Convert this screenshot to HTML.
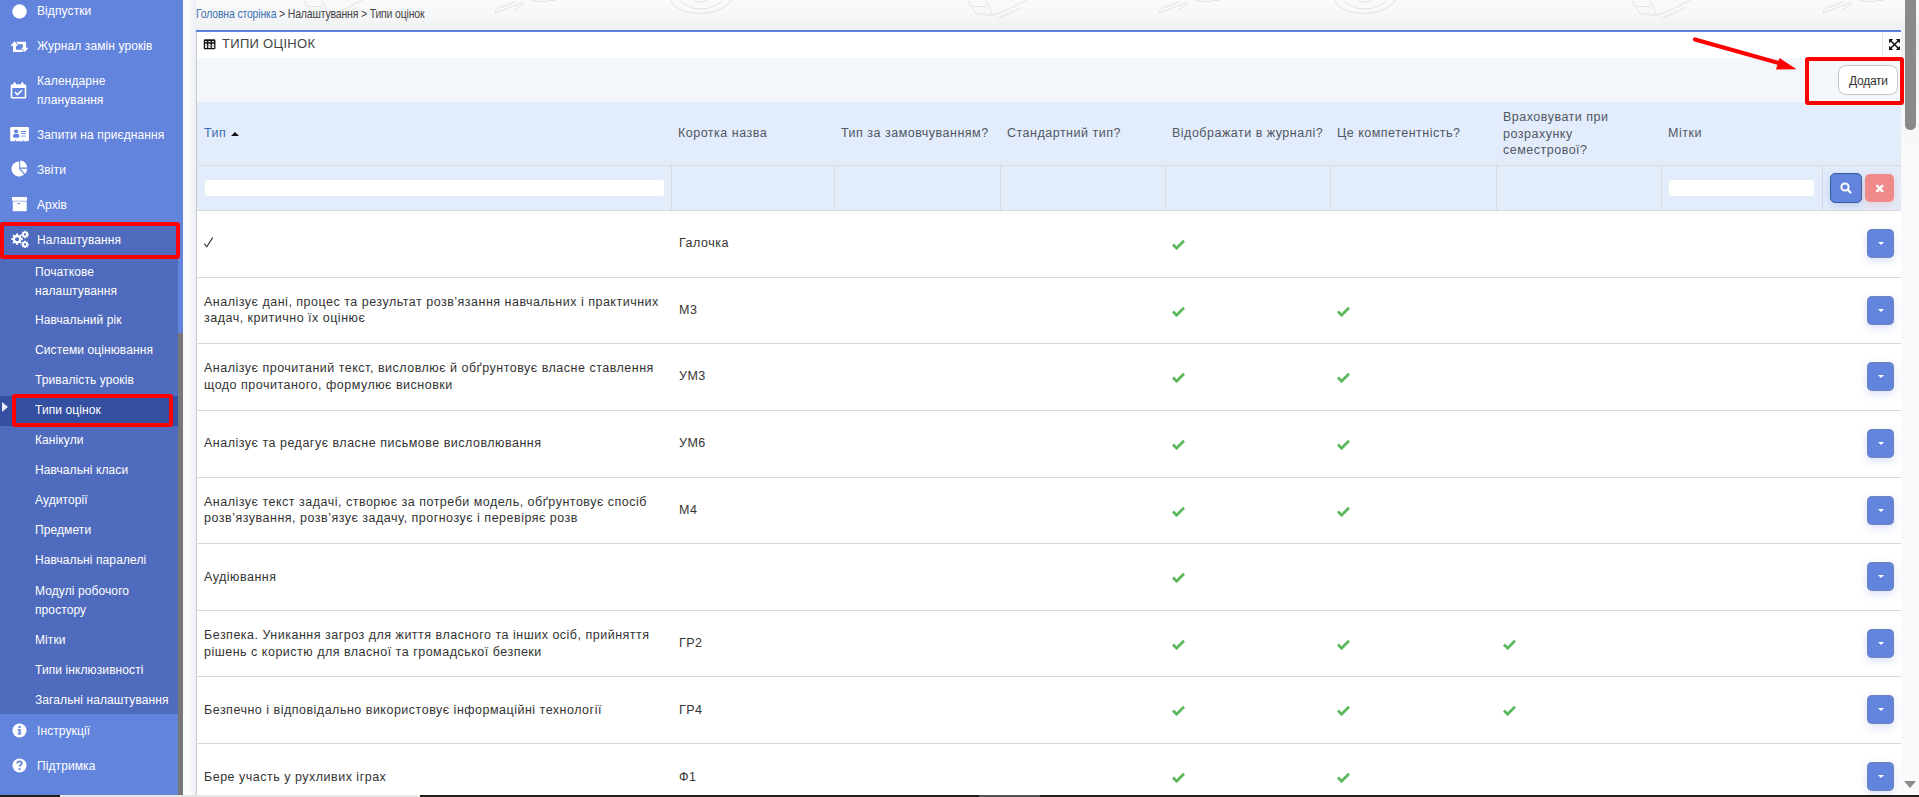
<!DOCTYPE html><html><head><meta charset="utf-8"><style>
*{box-sizing:border-box;margin:0;padding:0}
html,body{width:1919px;height:797px;overflow:hidden;font-family:"Liberation Sans",sans-serif}
body{background:#fafafa;position:relative}
.a{position:absolute}
#bg{left:183px;top:0;width:1736px;height:797px;background:linear-gradient(#fafafa 0,#f7f8f9 12px,#eef0f3 30px,#f3f4f6 70px,#f9f9fa 160px,#fafafa 300px)}
#sb{left:0;top:0;width:183px;height:797px;background:#6384dd;overflow:hidden}
.mi{position:absolute;left:37px;font-size:12px;letter-spacing:0.1px;color:#fff;white-space:nowrap;line-height:19px}
.si{position:absolute;left:35px;font-size:12px;letter-spacing:0.1px;color:#fff;white-space:nowrap;line-height:19px}
.ic{position:absolute}
#sub{left:0;top:222px;width:178px;height:492px;background:#4f6bbd}
#sbthumb{left:178px;top:333px;width:5px;height:464px;background:#777}
#gap{left:183px;top:0;width:13px;height:797px;background:linear-gradient(90deg,#f9f9fa,#fbfbfc 45%,#eaeef6)}
#panel{left:196px;top:30px;width:1705px;height:767px;background:#fff}
.t{position:absolute;font-size:12.5px;letter-spacing:0.5px;color:#333;white-space:nowrap;line-height:16px}
.h{position:absolute;font-size:12.5px;letter-spacing:0.5px;color:#4f5764;white-space:nowrap;line-height:16.5px}
.hl{position:absolute;height:1px;background:#dadada}
.vl{position:absolute;width:1px;background:#d6d9de}
.ck{position:absolute;width:13px;height:11px}
.dd{position:absolute;left:1670.5px;width:27.5px;height:29px;border-radius:5px;background:#6384dd;box-shadow:inset 0 0 0 0.6px rgba(150,130,100,.45),0 3px 8px rgba(99,132,221,.25)}
.dd:after{content:"";position:absolute;left:11.3px;top:13px;border-left:3.5px solid transparent;border-right:3.5px solid transparent;border-top:3.5px solid #fff}
</style></head><body>
<div id="bg" class="a"></div>
<svg class="a" style="left:0;top:0" width="1919" height="30"><g fill="none" stroke="#e2e3e6" stroke-width="1"><g transform="translate(-1328,0)"><path d="M1188 2 L1163 11.5 Q1157 14 1160 12.5 Q1158 9 1166 7 L1180 1" /><path d="M1177 11 L1188 3"/><path d="M1195 0.5 Q1208 3 1220 0"/><path d="M1333 -2 Q1340 14 1365 13.5 Q1392 12 1398 -4"/><path d="M1343 -1 Q1350 9 1365 9 Q1382 8 1388 -2"/><path d="M1358 0 Q1365 4 1372 0"/><path d="M1631.5 0 L1640 13.5 L1657 15.5 L1649.4 0 M1637 6.5 L1651 6.5 M1658 15 Q1672 10 1691 0 M1662 18.5 Q1675 13 1686 7"/></g><g transform="translate(-664,0)"><path d="M1188 2 L1163 11.5 Q1157 14 1160 12.5 Q1158 9 1166 7 L1180 1" /><path d="M1177 11 L1188 3"/><path d="M1195 0.5 Q1208 3 1220 0"/><path d="M1333 -2 Q1340 14 1365 13.5 Q1392 12 1398 -4"/><path d="M1343 -1 Q1350 9 1365 9 Q1382 8 1388 -2"/><path d="M1358 0 Q1365 4 1372 0"/><path d="M1631.5 0 L1640 13.5 L1657 15.5 L1649.4 0 M1637 6.5 L1651 6.5 M1658 15 Q1672 10 1691 0 M1662 18.5 Q1675 13 1686 7"/></g><g transform="translate(0,0)"><path d="M1188 2 L1163 11.5 Q1157 14 1160 12.5 Q1158 9 1166 7 L1180 1" /><path d="M1177 11 L1188 3"/><path d="M1195 0.5 Q1208 3 1220 0"/><path d="M1333 -2 Q1340 14 1365 13.5 Q1392 12 1398 -4"/><path d="M1343 -1 Q1350 9 1365 9 Q1382 8 1388 -2"/><path d="M1358 0 Q1365 4 1372 0"/><path d="M1631.5 0 L1640 13.5 L1657 15.5 L1649.4 0 M1637 6.5 L1651 6.5 M1658 15 Q1672 10 1691 0 M1662 18.5 Q1675 13 1686 7"/></g><g transform="translate(664,0)"><path d="M1188 2 L1163 11.5 Q1157 14 1160 12.5 Q1158 9 1166 7 L1180 1" /><path d="M1177 11 L1188 3"/><path d="M1195 0.5 Q1208 3 1220 0"/><path d="M1333 -2 Q1340 14 1365 13.5 Q1392 12 1398 -4"/><path d="M1343 -1 Q1350 9 1365 9 Q1382 8 1388 -2"/><path d="M1358 0 Q1365 4 1372 0"/><path d="M1631.5 0 L1640 13.5 L1657 15.5 L1649.4 0 M1637 6.5 L1651 6.5 M1658 15 Q1672 10 1691 0 M1662 18.5 Q1675 13 1686 7"/></g></g></svg>
<div id="sb" class="a">
<div id="sub" class="a"></div>
<div class="a" style="left:0;top:396px;width:178px;height:30px;background:#3550a0"></div>
<div id="sbthumb" class="a"></div>
<div class="mi" style="top:2px">Відпустки</div>
<div class="mi" style="top:37px">Журнал замін уроків</div>
<div class="mi" style="top:72px">Календарне<br>планування</div>
<div class="mi" style="top:126px">Запити на приєднання</div>
<div class="mi" style="top:161px">Звіти</div>
<div class="mi" style="top:196px">Архів</div>
<div class="mi" style="top:231px">Налаштування</div>
<div class="si" style="top:263px">Початкове<br>налаштування</div>
<div class="si" style="top:311px">Навчальний рік</div>
<div class="si" style="top:341px">Системи оцінювання</div>
<div class="si" style="top:371px">Тривалість уроків</div>
<div class="si" style="top:401px">Типи оцінок</div>
<div class="si" style="top:431px">Канікули</div>
<div class="si" style="top:461px">Навчальні класи</div>
<div class="si" style="top:491px">Аудиторії</div>
<div class="si" style="top:521px">Предмети</div>
<div class="si" style="top:551px">Навчальні паралелі</div>
<div class="si" style="top:582px">Модулі робочого<br>простору</div>
<div class="si" style="top:631px">Мітки</div>
<div class="si" style="top:661px">Типи інклюзивності</div>
<div class="si" style="top:691px">Загальні налаштування</div>
<div class="mi" style="top:722px">Інструкції</div>
<div class="mi" style="top:757px">Підтримка</div>
<svg class="ic" style="left:12px;top:4px" width="15" height="15"><circle cx="7.5" cy="7.5" r="7.2" fill="#fff"/></svg>
<svg class="ic" style="left:10px;top:41px" width="19" height="11" viewBox="0 0 19 11"><path fill="#fff" d="M0.5 4.7 L4.5 0.2 L8.2 4.7 L6 4.7 L6 8.7 L11.9 8.7 L13.6 10.9 L3 10.9 L3 4.7 Z M18.5 6.7 L14.7 10.9 L11 6.7 L12.9 6.7 L12.9 3.2 L7.8 3.2 L6.1 0.8 L16 0.8 L16 6.7 Z"/></svg>
<svg class="ic" style="left:10px;top:82px" width="17" height="17" viewBox="0 0 17 17"><rect x="1.5" y="3.2" width="14" height="12.6" rx="0.8" fill="none" stroke="#fff" stroke-width="1.6"/><rect x="1" y="2.6" width="15" height="3.4" fill="#fff"/><rect x="3.6" y="0.3" width="2.2" height="3.6" rx="1" fill="#fff"/><rect x="11.2" y="0.3" width="2.2" height="3.6" rx="1" fill="#fff"/><path d="M5 10.2 L7.5 12.6 L12 8.2" fill="none" stroke="#fff" stroke-width="1.6"/></svg>
<svg class="ic" style="left:10px;top:127px" width="19" height="15" viewBox="0 0 19 15"><rect x="0.2" y="0" width="18.7" height="14.3" rx="1.2" fill="#fff"/><circle cx="6.1" cy="4.5" r="2.1" fill="#6384dd"/><rect x="3.1" y="7" width="6.2" height="3.7" rx="1.5" fill="#6384dd"/><rect x="10.9" y="4" width="5.1" height="1" fill="#6384dd"/><rect x="10.9" y="6" width="5.1" height="0.9" fill="#6384dd"/><rect x="10.9" y="8.3" width="5.1" height="1.7" fill="#6384dd" opacity=".45"/><rect x="5" y="13.1" width="0.9" height="1.2" fill="#6384dd"/><rect x="13.2" y="13.1" width="0.9" height="1.2" fill="#6384dd"/></svg>
<svg class="ic" style="left:11px;top:160px" width="17" height="17" viewBox="0 0 17 17"><path fill="#fff" d="M8.2 1.4 A7.5 7.5 0 1 0 13 14.5 L8.2 8.9 Z"/><path fill="#fff" d="M9.2 0.6 A7.2 7.2 0 0 1 16.2 7.6 L9.2 7.6 Z"/><path fill="#fff" d="M9.6 8.7 L16.2 8.7 A7.3 7.3 0 0 1 13.9 13.8 Z"/></svg>
<svg class="ic" style="left:11px;top:196px" width="17" height="16" viewBox="0 0 17 16"><rect x="1" y="1" width="15" height="3.8" fill="#fff"/><rect x="1.8" y="5.4" width="13.9" height="9.8" fill="#fff"/><rect x="6.2" y="7.2" width="3" height="0.9" fill="#6384dd"/></svg>
<svg class="ic" style="left:10px;top:230px" width="19" height="18" viewBox="0 0 19 18"><g fill="#fff"><path d="M6.5 3.2 l1.2 0 .4 1.6 1.3.6 1.4-.9 .9.9 -.9 1.4 .6 1.3 1.6.4 0 1.2 -1.6.4 -.6 1.3 .9 1.4 -.9.9 -1.4-.9 -1.3.6 -.4 1.6 -1.2 0 -.4-1.6 -1.3-.6 -1.4.9 -.9-.9 .9-1.4 -.6-1.3 -1.6-.4 0-1.2 1.6-.4 .6-1.3 -.9-1.4 .9-.9 1.4.9 1.3-.6z"/></g><circle cx="7.1" cy="9.2" r="2" fill="#4f6bbd"/><g fill="#fff"><path d="M14.6 0.5 l.9 0 .3 1 .8.4 .9-.5 .6.6 -.5.9 .4.8 1 .3 0 .9 -1 .3 -.4.8 .5.9 -.6.6 -.9-.5 -.8.4 -.3 1 -.9 0 -.3-1 -.8-.4 -.9.5 -.6-.6 .5-.9 -.4-.8 -1-.3 0-.9 1-.3 .4-.8 -.5-.9 .6-.6 .9.5 .8-.4z"/><path d="M14.6 10.5 l.9 0 .3 1 .8.4 .9-.5 .6.6 -.5.9 .4.8 1 .3 0 .9 -1 .3 -.4.8 .5.9 -.6.6 -.9-.5 -.8.4 -.3 1 -.9 0 -.3-1 -.8-.4 -.9.5 -.6-.6 .5-.9 -.4-.8 -1-.3 0-.9 1-.3 .4-.8 -.5-.9 .6-.6 .9.5 .8-.4z"/></g><circle cx="15" cy="4.4" r="1.1" fill="#4f6bbd"/><circle cx="15" cy="14.4" r="1.1" fill="#4f6bbd"/></svg>
<svg class="ic" style="left:12px;top:722.5px" width="15" height="15" viewBox="0 0 15 15"><circle cx="7.5" cy="7.5" r="7" fill="#fff"/><circle cx="7.6" cy="3.9" r="1.2" fill="#6384dd"/><path fill="#6384dd" d="M5.6 6 H8.7 V10.4 H9.6 V11.6 H5.6 V10.4 H6.5 V7.2 H5.6 Z"/></svg>
<svg class="ic" style="left:12px;top:757.5px" width="15" height="15" viewBox="0 0 15 15"><circle cx="7.5" cy="7.5" r="7" fill="#fff"/><path d="M5.2 5.6 Q5.2 3.3 7.5 3.3 Q9.8 3.3 9.8 5.3 Q9.8 6.6 8.4 7.3 Q7.6 7.7 7.6 8.8" fill="none" stroke="#6384dd" stroke-width="1.7"/><circle cx="7.6" cy="11.2" r="1.1" fill="#6384dd"/></svg>
<div class="a" style="left:2px;top:402px;width:0;height:0;border-top:5px solid transparent;border-bottom:5px solid transparent;border-left:6px solid #e8ecf8"></div>
<div class="a" style="left:0;top:221.5px;width:180.3px;height:37.5px;border:4px solid #f00;border-radius:3px"></div>
<div class="a" style="left:12px;top:394px;width:161px;height:33px;border:4px solid #f00;border-radius:3px"></div>
</div>
<div id="gap" class="a"></div>
<div class="a" style="left:196px;top:6px;font-size:13px;line-height:16px;white-space:nowrap;transform:scaleX(0.805);transform-origin:0 0;letter-spacing:-0.2px;color:#444"><span style="color:#4270b0">Головна сторінка</span> &gt; Налаштування &gt; Типи оцінок</div>
<div class="a" style="left:1905px;top:0;width:11px;height:130px;background:#8a8a8a;border-radius:0 0 5px 5px"></div>
<div class="a" style="left:1904px;top:781px;width:0;height:0;border-left:6.5px solid transparent;border-right:6.5px solid transparent;border-top:7px solid #8a8a8a"></div>
<div id="panel" class="a">
<div class="a" style="left:0;top:28px;width:1705px;height:44px;background:#f3f6fa"></div>
<div class="a" style="left:0;top:72px;width:1705px;height:108px;background:#e3ecfa"></div>
<div class="a" style="left:0;top:0;width:1px;height:767px;background:#c9c9c9"></div><div class="a" style="left:0;top:0;width:1705px;height:2px;background:#5b7fdc"></div>
<div class="a" style="left:1686px;top:2px;width:1px;height:25px;background:#e2e2e2"></div>
<svg class="a" style="left:7px;top:9px" width="13" height="11" viewBox="0 0 13 11"><g fill="none" stroke="#111" stroke-width="1.3"><rect x="1.4" y="1.2" width="10.4" height="8.4" rx="0.6"/><path d="M4.6 1 V9.8 M8.3 1 V9.8 M1 4 H12"/></g><path d="M1 1.4 H12" stroke="#111" stroke-width="1.6"/><path d="M1.5 6.8 H11.5" stroke="#888" stroke-width="0.8"/></svg>
<div class="a" style="left:26px;top:6px;font-size:13px;letter-spacing:0.3px;color:#444;line-height:16px;white-space:nowrap">ТИПИ ОЦІНОК</div>
<svg class="a" style="left:1693px;top:9px" width="11" height="11" viewBox="0 0 11 11"><g fill="#111"><path d="M0 0 H4.2 L0 4.2 Z"/><path d="M11 0 V4.2 L6.8 0 Z"/><path d="M0 11 V6.8 L4.2 11 Z"/><path d="M11 11 H6.8 L11 6.8 Z"/></g><path d="M1.2 1.2 L9.8 9.8 M9.8 1.2 L1.2 9.8" stroke="#111" stroke-width="1.5"/></svg>
<div class="a" style="left:1642px;top:35px;width:60px;height:30px;background:#fff;border:1px solid #c8c8c8;border-radius:8px"></div>
<div class="a" style="left:1653px;top:44px;font-size:12px;letter-spacing:-0.25px;color:#333;line-height:14px;white-space:nowrap">Додати</div>
<div class="h" style="left:482px;top:95px">Коротка назва</div>
<div class="h" style="left:645px;top:95px">Тип за замовчуванням?</div>
<div class="h" style="left:811px;top:95px">Стандартний тип?</div>
<div class="h" style="left:976px;top:95px">Відображати в журналі?</div>
<div class="h" style="left:1141px;top:95px">Це компетентність?</div>
<div class="h" style="left:1472px;top:95px">Мітки</div>
<div class="h" style="left:1307px;top:79px">Враховувати при<br>розрахунку<br>семестрової?</div>
<div class="h" style="left:8px;top:95px;color:#3d6bb3">Тип</div>
<div class="a" style="left:35px;top:102px;width:0;height:0;border-left:4px solid transparent;border-right:4px solid transparent;border-bottom:4.5px solid #111"></div>
<div class="hl" style="left:0;top:135px;width:1705px"></div>
<div class="hl" style="left:0;top:180px;width:1705px"></div>
<div class="vl" style="left:475px;top:136px;height:44px"></div>
<div class="vl" style="left:638px;top:136px;height:44px"></div>
<div class="vl" style="left:804px;top:136px;height:44px"></div>
<div class="vl" style="left:969px;top:136px;height:44px"></div>
<div class="vl" style="left:1134px;top:136px;height:44px"></div>
<div class="vl" style="left:1300px;top:136px;height:44px"></div>
<div class="vl" style="left:1465px;top:136px;height:44px"></div>
<div class="vl" style="left:1626px;top:136px;height:44px"></div>
<div class="a" style="left:9px;top:150px;width:459px;height:16px;background:#fff;border-radius:3px"></div>
<div class="a" style="left:1473px;top:150px;width:145px;height:16px;background:#fff;border-radius:3px"></div>
<div class="a" style="left:1634px;top:143px;width:32px;height:30px;background:#6384dd;border:1px solid #2f5d9c;border-radius:5px;box-shadow:0 3px 8px rgba(99,132,221,.3)"><svg width="30" height="28" style="position:absolute;left:0;top:0"><circle cx="14" cy="13" r="3.6" fill="none" stroke="#fff" stroke-width="2"/><line x1="16.6" y1="15.6" x2="19.5" y2="18.5" stroke="#fff" stroke-width="2.2" stroke-linecap="round"/></svg></div>
<div class="a" style="left:1669px;top:144px;width:29px;height:28px;background:#f08a8a;border-radius:5px;box-shadow:0 3px 8px rgba(240,138,138,.3)"><svg width="29" height="28" style="position:absolute;left:0;top:0"><path d="M12.1 11.9 L17.3 17.1 M17.3 11.9 L12.1 17.1" stroke="#fff" stroke-width="2.5" stroke-linecap="round"/></svg></div>
<svg class="a" style="left:7px;top:206px" width="11" height="12" viewBox="0 0 11 12"><path d="M1.3 7.6 L3.8 10.8 L9.6 1.6" fill="none" stroke="#333" stroke-width="1.1"/></svg>
<div class="t" style="left:483px;top:205px">Галочка</div>
<svg class="ck" viewBox="0 0 13 11" style="left:976px;top:209px"><path d="M1 5.6 L4.6 9.2 L12 1.8" fill="none" stroke="#5cb85c" stroke-width="2.8"/></svg>
<div class="dd" style="top:198.5px"></div>
<div class="hl" style="left:0;top:247px;width:1705px"></div>
<div class="t" style="left:8px;top:264px">Аналізує дані, процес та результат розв’язання навчальних і практичних</div>
<div class="t" style="left:8px;top:280px">задач, критично їх оцінює</div>
<div class="t" style="left:483px;top:272px">М3</div>
<svg class="ck" viewBox="0 0 13 11" style="left:976px;top:276px"><path d="M1 5.6 L4.6 9.2 L12 1.8" fill="none" stroke="#5cb85c" stroke-width="2.8"/></svg>
<svg class="ck" viewBox="0 0 13 11" style="left:1141px;top:276px"><path d="M1 5.6 L4.6 9.2 L12 1.8" fill="none" stroke="#5cb85c" stroke-width="2.8"/></svg>
<div class="dd" style="top:265.5px"></div>
<div class="hl" style="left:0;top:313px;width:1705px"></div>
<div class="t" style="left:8px;top:330px">Аналізує прочитаний текст, висловлює й обґрунтовує власне ставлення</div>
<div class="t" style="left:8px;top:347px">щодо прочитаного, формулює висновки</div>
<div class="t" style="left:483px;top:338px">УМ3</div>
<svg class="ck" viewBox="0 0 13 11" style="left:976px;top:342px"><path d="M1 5.6 L4.6 9.2 L12 1.8" fill="none" stroke="#5cb85c" stroke-width="2.8"/></svg>
<svg class="ck" viewBox="0 0 13 11" style="left:1141px;top:342px"><path d="M1 5.6 L4.6 9.2 L12 1.8" fill="none" stroke="#5cb85c" stroke-width="2.8"/></svg>
<div class="dd" style="top:331.5px"></div>
<div class="hl" style="left:0;top:380px;width:1705px"></div>
<div class="t" style="left:8px;top:405px">Аналізує та редагує власне письмове висловлювання</div>
<div class="t" style="left:483px;top:405px">УМ6</div>
<svg class="ck" viewBox="0 0 13 11" style="left:976px;top:409px"><path d="M1 5.6 L4.6 9.2 L12 1.8" fill="none" stroke="#5cb85c" stroke-width="2.8"/></svg>
<svg class="ck" viewBox="0 0 13 11" style="left:1141px;top:409px"><path d="M1 5.6 L4.6 9.2 L12 1.8" fill="none" stroke="#5cb85c" stroke-width="2.8"/></svg>
<div class="dd" style="top:398.5px"></div>
<div class="hl" style="left:0;top:447px;width:1705px"></div>
<div class="t" style="left:8px;top:464px">Аналізує текст задачі, створює за потреби модель, обґрунтовує спосіб</div>
<div class="t" style="left:8px;top:480px">розв’язування, розв’язує задачу, прогнозує і перевіряє розв</div>
<div class="t" style="left:483px;top:472px">М4</div>
<svg class="ck" viewBox="0 0 13 11" style="left:976px;top:476px"><path d="M1 5.6 L4.6 9.2 L12 1.8" fill="none" stroke="#5cb85c" stroke-width="2.8"/></svg>
<svg class="ck" viewBox="0 0 13 11" style="left:1141px;top:476px"><path d="M1 5.6 L4.6 9.2 L12 1.8" fill="none" stroke="#5cb85c" stroke-width="2.8"/></svg>
<div class="dd" style="top:465.5px"></div>
<div class="hl" style="left:0;top:513px;width:1705px"></div>
<div class="t" style="left:8px;top:539px">Аудіювання</div>
<svg class="ck" viewBox="0 0 13 11" style="left:976px;top:542px"><path d="M1 5.6 L4.6 9.2 L12 1.8" fill="none" stroke="#5cb85c" stroke-width="2.8"/></svg>
<div class="dd" style="top:531.5px"></div>
<div class="hl" style="left:0;top:580px;width:1705px"></div>
<div class="t" style="left:8px;top:597px">Безпека. Уникання загроз для життя власного та інших осіб, прийняття</div>
<div class="t" style="left:8px;top:614px">рішень с користю для власної та громадської безпеки</div>
<div class="t" style="left:483px;top:605px">ГР2</div>
<svg class="ck" viewBox="0 0 13 11" style="left:976px;top:609px"><path d="M1 5.6 L4.6 9.2 L12 1.8" fill="none" stroke="#5cb85c" stroke-width="2.8"/></svg>
<svg class="ck" viewBox="0 0 13 11" style="left:1141px;top:609px"><path d="M1 5.6 L4.6 9.2 L12 1.8" fill="none" stroke="#5cb85c" stroke-width="2.8"/></svg>
<svg class="ck" viewBox="0 0 13 11" style="left:1307px;top:609px"><path d="M1 5.6 L4.6 9.2 L12 1.8" fill="none" stroke="#5cb85c" stroke-width="2.8"/></svg>
<div class="dd" style="top:598.5px"></div>
<div class="hl" style="left:0;top:646px;width:1705px"></div>
<div class="t" style="left:8px;top:672px">Безпечно і відповідально використовує інформаційні технології</div>
<div class="t" style="left:483px;top:672px">ГР4</div>
<svg class="ck" viewBox="0 0 13 11" style="left:976px;top:675px"><path d="M1 5.6 L4.6 9.2 L12 1.8" fill="none" stroke="#5cb85c" stroke-width="2.8"/></svg>
<svg class="ck" viewBox="0 0 13 11" style="left:1141px;top:675px"><path d="M1 5.6 L4.6 9.2 L12 1.8" fill="none" stroke="#5cb85c" stroke-width="2.8"/></svg>
<svg class="ck" viewBox="0 0 13 11" style="left:1307px;top:675px"><path d="M1 5.6 L4.6 9.2 L12 1.8" fill="none" stroke="#5cb85c" stroke-width="2.8"/></svg>
<div class="dd" style="top:664.5px"></div>
<div class="hl" style="left:0;top:713px;width:1705px"></div>
<div class="t" style="left:8px;top:739px">Бере участь у рухливих іграх</div>
<div class="t" style="left:483px;top:739px">Ф1</div>
<svg class="ck" viewBox="0 0 13 11" style="left:976px;top:742px"><path d="M1 5.6 L4.6 9.2 L12 1.8" fill="none" stroke="#5cb85c" stroke-width="2.8"/></svg>
<svg class="ck" viewBox="0 0 13 11" style="left:1141px;top:742px"><path d="M1 5.6 L4.6 9.2 L12 1.8" fill="none" stroke="#5cb85c" stroke-width="2.8"/></svg>
<div class="dd" style="top:731.5px"></div>
</div>
<div class="a" style="left:1805px;top:56.5px;width:99px;height:48px;border:4px solid #f00;border-radius:3px"></div>
<svg class="a" style="left:0;top:0" width="1919" height="797"><path d="M1695 39.5 L1782 64" stroke="#f00" stroke-width="4.2" stroke-linecap="round"/><path d="M1779.5 58 L1796.5 69.3 L1776 69.6 Z" fill="#f00"/></svg>
<div class="a" style="left:0;top:795px;width:1919px;height:2px;background:#231d18"></div>
<div class="a" style="left:60px;top:795px;width:360px;height:2px;background:#e6e6e6"></div>
<div class="a" style="left:979px;top:795px;width:61px;height:2px;background:#555"></div>
</body></html>
